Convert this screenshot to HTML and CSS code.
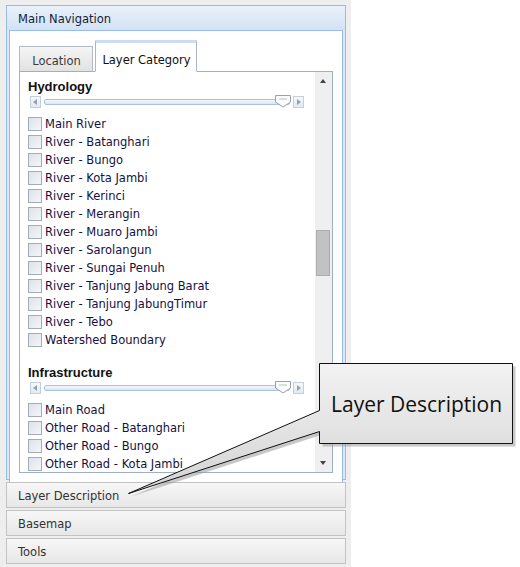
FILE: index.html
```
<!DOCTYPE html>
<html>
<head>
<meta charset="utf-8">
<link rel="stylesheet" href="styles.css">
</head>
<body>
<div class="page">
  <div class="side">
    <div class="nav">
      <div class="nav-head">Main Navigation</div>
      <div class="nav-body">
        <div class="tabs">
          <div class="tab">Location</div>
          <div class="tab active">Layer Category</div>
        </div>
        <div class="tab-panel">
          <div class="list">
            <div class="group-title">Hydrology</div>
            <div class="slider">
              <span class="sbtn left"></span>
              <span class="track"></span>
              <span class="thumb"><svg width="17" height="13" viewBox="0 0 17 13"><path d="M0.5 0.5 H15.5 V7 L8 12 L0.5 7 Z" fill="#fbfbfb" stroke="#9aa0ac"/><path d="M4 4 H12" stroke="#b8bec8"/></svg></span>
              <span class="sbtn right"></span>
            </div>
            <div class="rows">
              <label class="row"><span class="cb"></span>Main River</label>
              <label class="row"><span class="cb"></span>River - Batanghari</label>
              <label class="row"><span class="cb"></span>River - Bungo</label>
              <label class="row"><span class="cb"></span>River - Kota Jambi</label>
              <label class="row"><span class="cb"></span>River - Kerinci</label>
              <label class="row"><span class="cb"></span>River - Merangin</label>
              <label class="row"><span class="cb"></span>River - Muaro Jambi</label>
              <label class="row"><span class="cb"></span>River - Sarolangun</label>
              <label class="row"><span class="cb"></span>River - Sungai Penuh</label>
              <label class="row"><span class="cb"></span>River - Tanjung Jabung Barat</label>
              <label class="row"><span class="cb"></span>River - Tanjung JabungTimur</label>
              <label class="row"><span class="cb"></span>River - Tebo</label>
              <label class="row"><span class="cb"></span>Watershed Boundary</label>
            </div>
            <div class="group-title second">Infrastructure</div>
            <div class="slider">
              <span class="sbtn left"></span>
              <span class="track"></span>
              <span class="thumb"><svg width="17" height="13" viewBox="0 0 17 13"><path d="M0.5 0.5 H15.5 V7 L8 12 L0.5 7 Z" fill="#fbfbfb" stroke="#9aa0ac"/><path d="M4 4 H12" stroke="#b8bec8"/></svg></span>
              <span class="sbtn right"></span>
            </div>
            <div class="rows">
              <label class="row"><span class="cb"></span>Main Road</label>
              <label class="row"><span class="cb"></span>Other Road - Batanghari</label>
              <label class="row"><span class="cb"></span>Other Road - Bungo</label>
              <label class="row"><span class="cb"></span>Other Road - Kota Jambi</label>
            </div>
          </div>
          <div class="scrollbar">
            <span class="arrow up"></span>
            <span class="sthumb"></span>
            <span class="arrow down"></span>
          </div>
        </div>
      </div>
    </div>
    <div class="acc">Layer Description</div>
    <div class="acc">Basemap</div>
    <div class="acc">Tools</div>
  </div>
  <div class="callout">
    <svg class="callout-shape" width="400" height="150" viewBox="0 0 400 150">
      <defs>
        <linearGradient id="cg" x1="0" y1="0" x2="0" y2="1">
          <stop offset="0" stop-color="#f3f3f3"/>
          <stop offset="1" stop-color="#d3d3d3"/>
        </linearGradient>
      </defs>
      <path d="M387.5 4.5 H194.5 V51.5 L3.5 134.5 L194.5 72.5 V84.5 H387.5 Z" fill="#9a9a9a" transform="translate(3,3)" opacity="0.55"/>
      <path d="M387.5 4.5 H194.5 V51.5 L3.5 134.5 L194.5 72.5 V84.5 H387.5 Z" fill="url(#cg)" stroke="#111" stroke-width="1"/>
    </svg>
    <div class="callout-text">Layer Description</div>
  </div>
</div>
</body>
</html>
```
FILE: styles.css
```
* { box-sizing: border-box; }
html, body { margin: 0; padding: 0; background: #ffffff; }
body { font-family: "DejaVu Sans", Verdana, sans-serif; font-size: 11.5px; color: #111; }

.page { position: relative; width: 520px; height: 567px; overflow: hidden; }

.side {
  width: 351px;
  height: 567px;
  background: #eeeeee;
  padding: 5px 0 0 6px;
  display: flex;
  flex-direction: column;
  gap: 2px;
}

.nav {
  width: 340px;
  height: 475px;
  border: 1px solid #99bbe8;
  background: #dfe8f6;
  display: flex;
  flex-direction: column;
}
.nav-head {
  height: 24px;
  line-height: 27px;
  padding-left: 11px;
  font-size: 11.5px;
  color: #15223c;
  background: linear-gradient(#e9f1fb, #d2e2f4);
}
.nav-body {
  flex: 1;
  margin: 0 2px 1px 2px;
  border: 1px solid #99bbe8;
  background: #fff;
  padding: 10px 9px 9px 9px;
  display: flex;
  flex-direction: column;
}

.tabs { display: flex; align-items: flex-end; gap: 2px; height: 31px; margin-bottom: -1px; position: relative; z-index: 1; }
.tab {
  height: 26px;
  width: 74px;
  border: 1px solid #b1b8c8;
  border-bottom-color: #a0afc8;
  background: linear-gradient(#f5f5f5, #e2e2e2);
  color: #3a3a3a;
  font-size: 11.5px;
  line-height: 29px;
  text-align: center;
  padding-left: 1px;
}
.tab.active {
  height: 32px;
  width: 102px;
  background: #fff;
  border-color: #a8b6cc;
  border-bottom-color: #fff;
  border-top: 3px solid #cfdcef;
  color: #111;
  line-height: 32px;
  padding-top: 1px;
}

.tab-panel {
  flex: 1;
  border: 1px solid #a0afc8;
  display: flex;
  overflow: hidden;
  background: #fff;
}
.list { flex: 1; padding: 7px 0 0 8px; overflow: hidden; }
.group-title {
  font-family: "Liberation Sans", Arial, sans-serif;
  font-weight: bold;
  font-size: 13px;
  height: 16px;
  line-height: 16px;
  color: #111;
}
.group-title.second { margin-top: 17px; }

.slider { display: flex; align-items: center; height: 12px; margin: 1px 0 6px 2px; position: relative; }
.sbtn {
  width: 11px; height: 12px;
  border: 1px solid #c4cedc;
  background: linear-gradient(#f6f8fb, #e4e9f0);
  position: relative;
}
.sbtn::after {
  content: "";
  position: absolute;
  top: 2px;
  border-top: 3.5px solid transparent;
  border-bottom: 3.5px solid transparent;
}
.sbtn.left::after { left: 2px; border-right: 4px solid #8ea2bf; }
.sbtn.right::after { left: 3px; border-left: 4px solid #8ea2bf; }
.track {
  width: 246px; height: 6px; margin: 0 3px 0 3px;
  border: 1px solid #a9c2e0;
  background: linear-gradient(#f2f7fd, #d8e6f5);
  border-radius: 2px;
}
.thumb { position: absolute; left: 245px; top: -1px; height: 13px; }
.thumb svg { display: block; }

.rows { display: flex; flex-direction: column; }
.row { display: flex; align-items: center; height: 18px; color: #160f40; font-size: 11.5px; padding-top: 1px; }
.cb {
  width: 14px; height: 14px;
  border: 1px solid #a3abb8;
  background: linear-gradient(135deg, #dce3ec, #f4f6f9);
  margin-right: 3px;
  flex: none;
}

.scrollbar {
  width: 17px;
  background: #efefef;
  position: relative;
  flex: none;
}
.arrow { position: absolute; left: 5px; width: 0; height: 0; border-left: 3.5px solid transparent; border-right: 3.5px solid transparent; }
.arrow.up { top: 7px; border-bottom: 4px solid #444; }
.arrow.down { bottom: 7px; border-top: 4px solid #444; }
.sthumb {
  position: absolute; left: 1px; top: 158px; width: 14px; height: 46px;
  background: #c2c2c2; border: 1px solid #adadad;
}

.acc {
  width: 340px;
  height: 26px;
  border: 1px solid #c3c3c3;
  background: linear-gradient(#f7f7f7, #e7e7e7);
  color: #333;
  font-size: 11.5px;
  line-height: 27px;
  padding-left: 11px;
}

.callout { position: absolute; left: 125px; top: 359px; width: 400px; height: 150px; }
.callout-shape { position: absolute; left: 0; top: 0; }
.callout-text {
  position: absolute;
  left: 206px;
  top: 31px;
  font-family: "Open Sans", "Noto Sans", sans-serif;
  font-size: 21px;
  color: #111;
  white-space: nowrap;
}
```
